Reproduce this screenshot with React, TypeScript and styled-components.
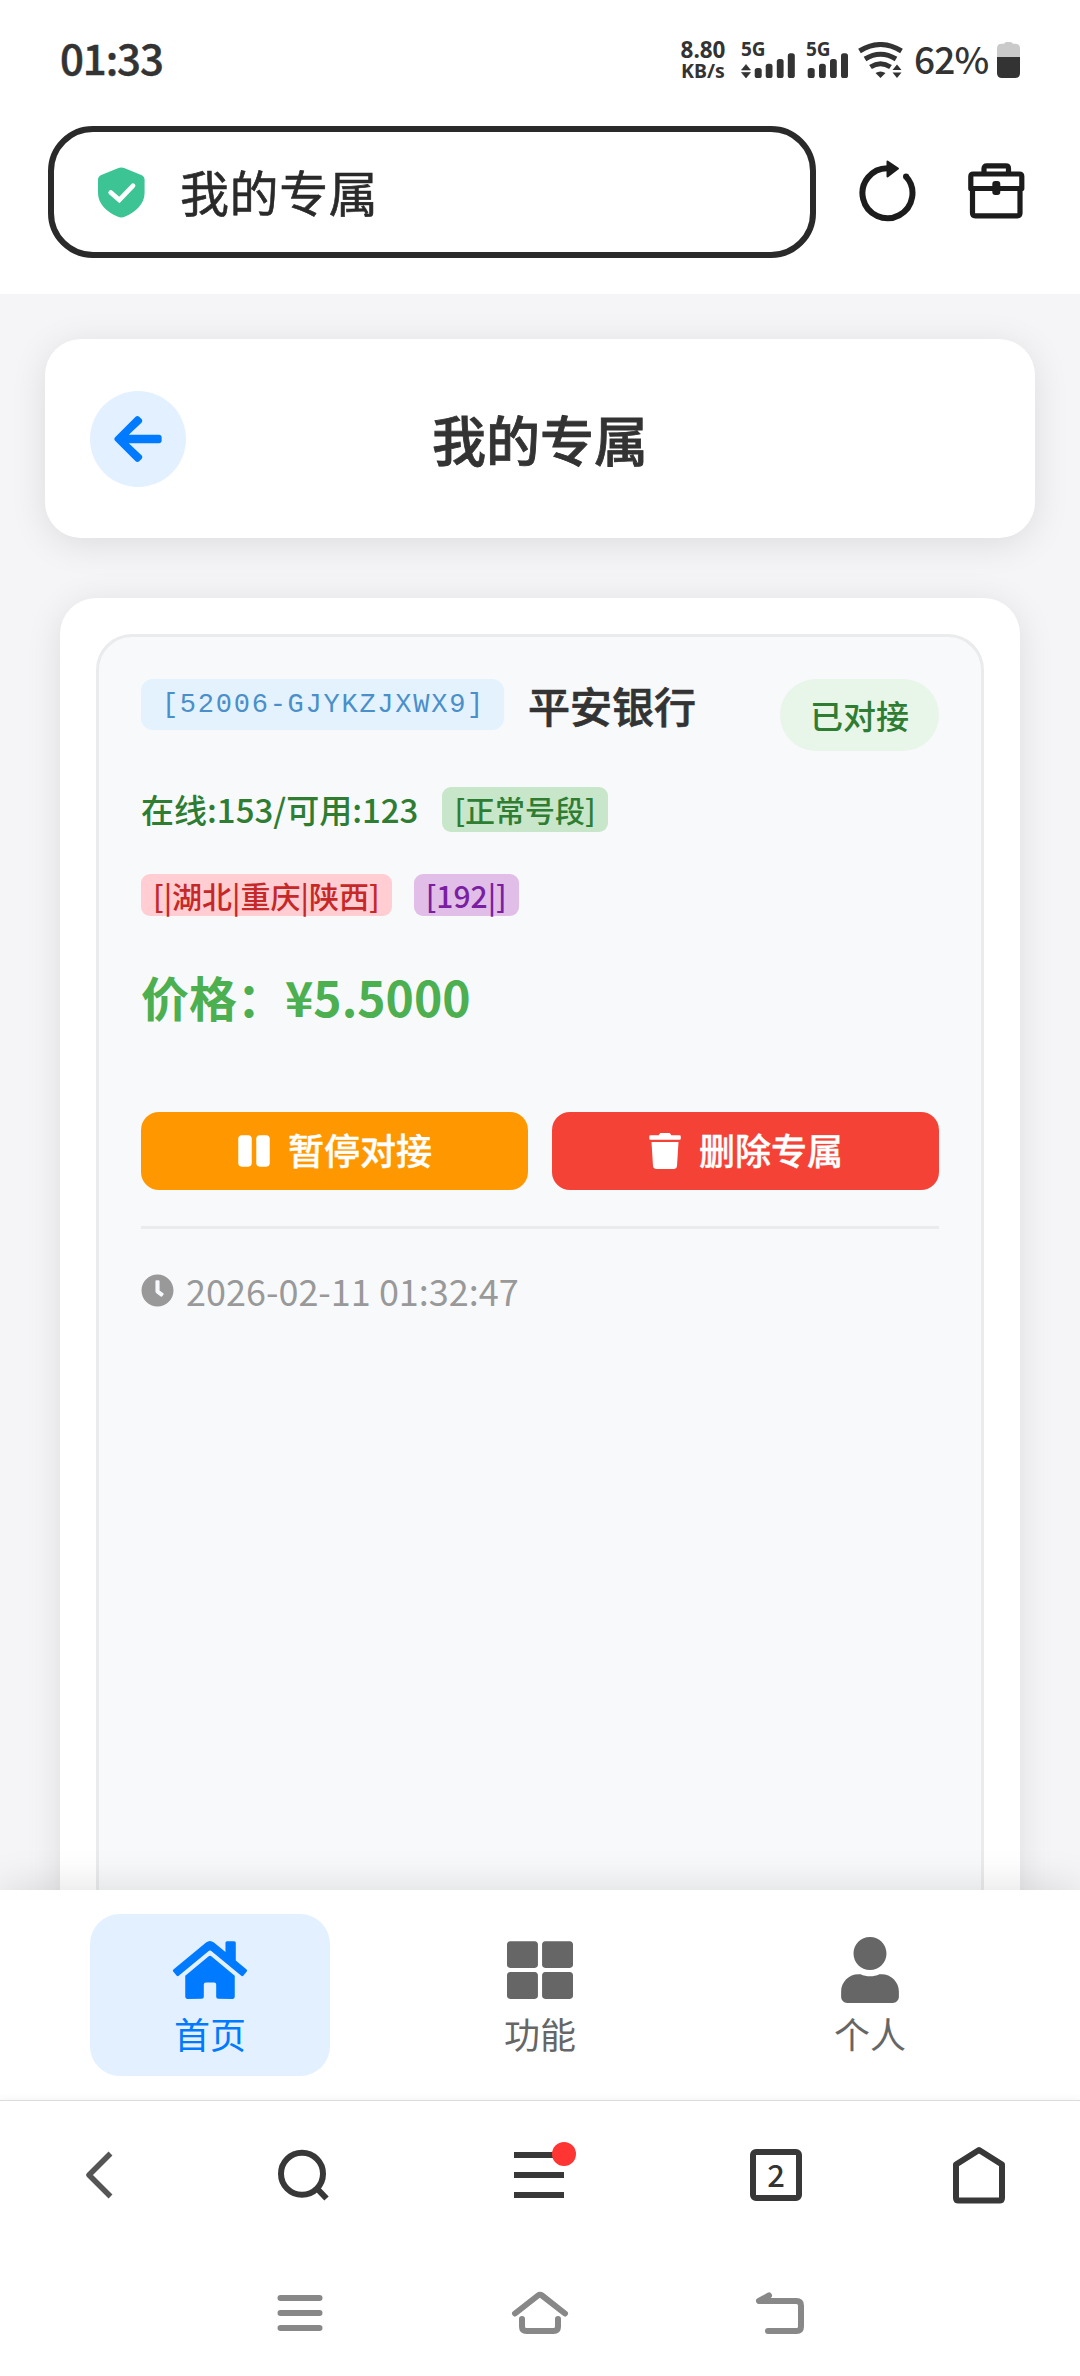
import React from 'react';
import styled, { createGlobalStyle } from 'styled-components';
import { FaArrowLeft, FaClock, FaHome, FaPause, FaThLarge, FaTrash, FaUser } from 'react-icons/fa';

const GlobalStyle = createGlobalStyle`
  * { box-sizing: border-box; }
  body {
    margin: 0;
    background: #fff;
    font-family: "Noto Sans CJK SC", "Noto Sans", sans-serif;
    color: #333;
  }
  svg { display: block; flex: none; }
`;

const Screen = styled.div`
  width: 1080px;
  height: 2376px;
  display: flex;
  flex-direction: column;
  overflow: hidden;
  background: #fff;
`;

/* ---------- status bar ---------- */

const StatusBar = styled.div`
  height: 126px;
  flex: none;
  display: flex;
  align-items: flex-start;
  padding: 0 60px 0 60px;
  color: #333;
`;

const Clock = styled.div`
  margin-top: 27px;
  font-size: 42px;
  line-height: 60px;
  font-weight: 500;
  letter-spacing: -1.1px;
  -webkit-text-stroke: 0.5px currentColor;
`;

const StatusIcons = styled.div`
  margin-left: auto;
  display: flex;
  align-items: flex-start;
`;

const NetSpeed = styled.div`
  width: 48px;
  margin: 38px 14px 0 0;
  text-align: center;
  font-family: "Noto Sans", sans-serif;
  font-weight: 700;
  white-space: nowrap;
`;

const SpeedValue = styled.div`
  font-size: 22.5px;
  line-height: 23px;
`;

const SpeedUnit = styled.div`
  font-size: 19.5px;
  line-height: 20px;
`;

const Signal = styled.div<{ $gap: number }>`
  width: 54px;
  height: 36px;
  margin: 42px ${(p) => p.$gap}px 0 0;
  position: relative;
`;

const SignalLabel = styled.span`
  position: absolute;
  left: 0;
  top: -2px;
  font: 700 19px/18px "Noto Sans", sans-serif;
`;

const Percent = styled.div`
  width: 73px;
  margin: 31px 10px 0 10px;
  font-size: 37px;
  line-height: 54px;
  font-weight: 500;
  letter-spacing: -0.8px;
  white-space: nowrap;
`;

const BatteryBox = styled.div`
  margin-top: 42px;
`;

/* ---------- browser address bar ---------- */

const AddressBar = styled.div`
  height: 168px;
  flex: none;
  display: flex;
  align-items: flex-start;
  padding-left: 48px;
`;

const UrlBox = styled.div`
  width: 768px;
  height: 132px;
  border: 6px solid #2a2a2a;
  border-radius: 45px;
  display: flex;
  align-items: center;
  padding: 0 0 0 44px;
  gap: 35px;
  font-size: 49px;
  letter-spacing: 0.6px;
  line-height: 60px;
  color: #2a2a2a;
`;

const UrlText = styled.span`
  margin-top: -2px;
  -webkit-text-stroke: 0.6px currentColor;
`;

const BarIcon = styled.div<{ $left: number; $top: number }>`
  margin: ${(p) => p.$top}px 0 0 ${(p) => p.$left}px;
`;

/* ---------- web page ---------- */

const Page = styled.main`
  height: 1596px;
  flex: none;
  overflow: hidden;
  background: #f5f5f8;
  padding: 45px 45px 0;
`;

const TitleCard = styled.header`
  height: 199px;
  padding: 0 45px;
  display: grid;
  grid-template-columns: 96px 1fr 96px;
  align-items: center;
  background: #fff;
  border-radius: 36px;
  box-shadow: 0 6px 36px rgba(0, 0, 0, 0.1);
`;

const BackButton = styled.button`
  width: 96px;
  height: 96px;
  padding: 0;
  border: 0;
  border-radius: 50%;
  background: #e3f0ff;
  color: #007aff;
  display: flex;
  align-items: center;
  justify-content: center;
`;

const Title = styled.h1`
  margin: 0;
  text-align: center;
  font-size: 54px;
  line-height: 78px;
  font-weight: 500;
  -webkit-text-stroke: 0.8px currentColor;
`;

const ListCard = styled.section`
  margin: 60px 15px 0;
  height: 1600px;
  padding: 36px;
  background: #fff;
  border-radius: 36px;
  box-shadow: 0 6px 36px rgba(0, 0, 0, 0.1);
`;

const Item = styled.article`
  height: 1500px;
  padding: 42px;
  border: 3px solid #e9ebed;
  border-radius: 36px;
  background: #f8f9fb;
`;

const ItemHead = styled.div`
  height: 72px;
  display: flex;
  align-items: flex-start;
`;

const Code = styled.span`
  width: 363px;
  height: 51px;
  padding-left: 2px;
  border-radius: 12px;
  background: #e3f2fd;
  color: #4a8fca;
  text-align: center;
  font: 27px/52px "Liberation Mono", monospace;
  letter-spacing: 1.75px;
`;

const BankName = styled.span`
  margin: -4px 0 0 24px;
  font-size: 42px;
  line-height: 60px;
  font-weight: 500;
  -webkit-text-stroke: 0.7px currentColor;
`;

const State = styled.span`
  margin-left: auto;
  height: 72px;
  padding: 0 30px;
  border-radius: 36px;
  background: #e8f5e9;
  color: #2e7d32;
  font-size: 33px;
  line-height: 72px;
  font-weight: 500;
`;

const TagRow = styled.div<{ $top: number; $gap: number }>`
  margin-top: ${(p) => p.$top}px;
  display: flex;
  align-items: center;
  gap: ${(p) => p.$gap}px;
`;

const Online = styled.span`
  color: #2e7d32;
  font-size: 33px;
  line-height: 45px;
  font-weight: 500;
`;

const Tag = styled.span<{ $bg: string; $fg: string; $h: number }>`
  height: ${(p) => p.$h}px;
  padding: 0 12px;
  border-radius: 9px;
  background: ${(p) => p.$bg};
  color: ${(p) => p.$fg};
  font-size: 30px;
  font-weight: 500;
  line-height: ${(p) => p.$h}px;
  white-space: nowrap;
`;

const Price = styled.div`
  margin-top: 50px;
  color: #4caf50;
  font-size: 48px;
  line-height: 61px;
  font-weight: 700;
`;

const Actions = styled.div`
  margin-top: 85px;
  display: grid;
  grid-template-columns: 1fr 1fr;
  gap: 24px;
`;

const Action = styled.button<{ $bg: string }>`
  height: 78px;
  padding: 0;
  border: 0;
  border-radius: 18px;
  background: ${(p) => p.$bg};
  color: #fff;
  display: flex;
  align-items: center;
  justify-content: center;
  font-family: inherit;
  font-size: 36px;
  font-weight: 500;
  line-height: 54px;
`;

const ActionLabel = styled.span`
  margin: -4px 1px 0 16px;
  -webkit-text-stroke: 0.4px currentColor;
`;

const Stamp = styled.div`
  margin-top: 36px;
  padding-top: 34px;
  border-top: 3px solid #e9ebed;
  display: flex;
  align-items: center;
  gap: 12px;
  color: #999;
  font-size: 36px;
  line-height: 54px;
`;

/* ---------- bottom tabs of the page ---------- */

const Tabs = styled.nav`
  height: 210px;
  flex: none;
  position: relative;
  padding: 24px 90px 0;
  display: flex;
  justify-content: space-between;
  align-items: flex-start;
  background: #fff;
  box-shadow: 0 -6px 36px rgba(0, 0, 0, 0.1);
`;

const Tab = styled.a<{ $active?: boolean }>`
  width: 240px;
  height: 162px;
  padding-top: 23px;
  border-radius: 30px;
  display: flex;
  flex-direction: column;
  align-items: center;
  background: ${(p) => (p.$active ? '#e3f0ff' : 'transparent')};
  color: ${(p) => (p.$active ? '#007aff' : '#666')};
  font-size: 36px;
  line-height: 54px;
  svg { width: 76px; height: 66px; }
`;

const TabLabel = styled.span`
  margin-top: 3px;
`;

/* ---------- browser toolbar and system keys ---------- */

const Toolbar = styled.div`
  height: 148px;
  flex: none;
  position: relative;
  border-top: 1px solid #dcdcdc;
  background: #fff;
  box-shadow: 0 -1px 8px rgba(0, 0, 0, 0.05);
  display: grid;
  grid-template-columns: 198px 210px 262px 212px 194px;
  align-items: center;
  justify-items: center;
`;

const WindowCount = styled.div`
  width: 52px;
  height: 52px;
  border: 6px solid #383838;
  border-radius: 6px;
  display: flex;
  align-items: center;
  justify-content: center;
  font-size: 31px;
  line-height: 36px;
  padding-bottom: 2px;
  font-weight: 500;
`;

const SystemKeys = styled.div`
  height: 128px;
  flex: none;
  position: relative;
  background: #fff;
  padding: 42px 180px 0;
  display: grid;
  grid-template-columns: repeat(3, 240px);
  justify-items: center;
  align-items: start;
`;

/* ---------- drawings ---------- */

const Bars = ({ data }: { data?: boolean }) => (
  <svg width="54" height="36" viewBox="0 0 54 36" fill="#333">
    {data && <path d="M5 22.5 9.5 28H.5zM5 36 .5 30.5h9z" stroke="#333" strokeWidth=".6" strokeLinejoin="round" />}
    <rect x={data ? 13.7 : 1.7} y="26" width="7" height="10" rx="2.6" />
    <rect x={data ? 24.7 : 13} y="21.7" width="6.8" height="14.3" rx="2.6" />
    <rect x={data ? 35.8 : 24} y="17" width="6.8" height="19" rx="2.6" />
    <rect x={data ? 46.8 : 35} y="11.3" width="7" height="24.7" rx="2.6" />
  </svg>
);

const Wifi = () => (
  <svg width="46" height="36" viewBox="0 0 46 36" fill="none" stroke="#333" strokeWidth="5">
    <path d="M1.5 9Q22.500 -4 43.500 9M7 17Q22.500 7.500 38 17M12.500 25Q22.500 18.500 32.500 25" />
    <path d="M17.500 31q5-3 10 0l-5 5z" fill="#333" stroke="none" />
    <path d="M39 22.500 43.500 28h-9zM39 36l-4.500-5.500h9z" fill="#333" stroke="none" />
  </svg>
);

const Battery = () => (
  <svg width="23" height="36" viewBox="0 0 23 36">
    <path d="M0 15V6.500Q0 2 4.500 1.800H7Q8 0 9.500 0h4Q15 0 16 1.800h2.500Q23 2 23 6.500V15z" fill="#cacaca" />
    <path d="M0 15h23v16q0 5-5 5H5q-5 0-5-5z" fill="#333" />
  </svg>
);

const Shield = () => (
  <svg width="47" height="51" viewBox="0 0 45 51" preserveAspectRatio="none" fill="none">
    <path d="M19 1.200Q22.300-.3 25.600 1.200L42 8.200q2.600 1.300 2.600 4V26c0 11-8.600 19-18.600 23.600q-3.700 1.700-7.400 0C8.600 45 0 37 0 26V12.200q0-2.700 2.600-4z" fill="#3cc494" />
    <path d="m12.200 25.500 8.200 7.500L33.500 18.800" stroke="#fff" strokeWidth="4.600" strokeLinecap="round" />
  </svg>
);

const Reload = () => (
  <svg width="58" height="62" viewBox="0 0 58 62" fill="none">
    <path d="M29 8.200A25 25 0 1 0 46.800 16.200" stroke="#1c1c1c" strokeWidth="6" />
    <path d="M28.500 1.500 39 8.500l-10.500 8z" fill="#1c1c1c" stroke="#1c1c1c" strokeWidth="2" strokeLinejoin="round" />
    <circle cx="47" cy="16.400" r="3" fill="#1c1c1c" />
  </svg>
);

const Briefcase = () => (
  <svg width="57" height="56" viewBox="0 0 57 56" fill="none" stroke="#1c1c1c" strokeWidth="5.200" strokeLinejoin="round">
    <path d="M16 11V5.500Q16 2.800 18.700 2.800h19.100q2.700 0 2.700 2.700V11" />
    <path d="M2.800 25.500V13.500q0-2.500 2.500-2.500h46q2.500 0 2.500 2.500v12z" />
    <path d="M4.500 26v24q0 2.800 2.800 2.800h42q2.700 0 2.700-2.800V26" />
    <rect x="24.300" y="18" width="8" height="14" rx="3" fill="#1c1c1c" stroke="none" />
  </svg>
);

const BackChevron = () => (
  <svg width="28" height="48" viewBox="0 0 28 48" fill="none" stroke="#555" strokeWidth="5.500" strokeLinejoin="round">
    <path d="M25.500 2.500 4 24l21.500 21.500" />
  </svg>
);

const Search = () => (
  <svg width="52" height="52" viewBox="0 0 52 52" fill="none" stroke="#383838" strokeWidth="6">
    <circle cx="25" cy="24.700" r="21" />
    <path d="m39 38.500 10.500 11" />
  </svg>
);

const MenuWithDot = () => (
  <svg width="74" height="74" viewBox="0 -6 74 74" fill="none">
    <path d="M12 11h50M12 31h50M12 51h50" stroke="#383838" strokeWidth="6" />
    <circle cx="62" cy="10" r="12" fill="#ff3533" />
  </svg>
);

const Homepage = () => (
  <svg width="52" height="58" viewBox="0 0 52 58" fill="none" stroke="#383838" strokeWidth="6" strokeLinejoin="round">
    <path d="M3 18.500 26 4l23 14.500V52q0 2.500-2.500 2.500h-41Q3 54.500 3 52z" />
  </svg>
);

const Recents = () => (
  <svg width="46" height="46" viewBox="0 0 46 46" fill="none" stroke="#888" strokeWidth="6" strokeLinecap="round">
    <path d="M3.500 8h39M3.500 23h39M3.500 38h39" />
  </svg>
);

const HomeKey = () => (
  <svg width="58" height="46" viewBox="0 0 58 46" fill="none" stroke="#888" strokeWidth="6" strokeLinecap="round" strokeLinejoin="round">
    <path d="M4 23.500 27 5.500q2-1.500 4 0l23 18M11 29v7.500q0 4.500 4.500 4.500h27q4.500 0 4.500-4.500V29" />
  </svg>
);

const BackKey = () => (
  <svg width="50" height="46" viewBox="0 0 50 46" fill="none" stroke="#888" strokeWidth="6" strokeLinecap="round" strokeLinejoin="round">
    <path d="M14 5.500 4 11h37.500q4.500 0 4.500 4.500v21q0 4.500-4.500 4.500H13" />
  </svg>
);

export default function App() {
  return (
    <>
      <GlobalStyle />
      <Screen>
        <StatusBar>
          <Clock>01:33</Clock>
          <StatusIcons>
            <NetSpeed>
              <SpeedValue>8.80</SpeedValue>
              <SpeedUnit>KB/s</SpeedUnit>
            </NetSpeed>
            <Signal $gap={11}>
              <Bars data />
              <SignalLabel>5G</SignalLabel>
            </Signal>
            <Signal $gap={-2}>
              <Bars />
              <SignalLabel>5G</SignalLabel>
            </Signal>
            <BatteryBox>
              <Wifi />
            </BatteryBox>
            <Percent>62%</Percent>
            <BatteryBox>
              <Battery />
            </BatteryBox>
          </StatusIcons>
        </StatusBar>

        <AddressBar>
          <UrlBox>
            <Shield />
            <UrlText>我的专属</UrlText>
          </UrlBox>
          <BarIcon $left={43} $top={34}>
            <Reload />
          </BarIcon>
          <BarIcon $left={51} $top={37}>
            <Briefcase />
          </BarIcon>
        </AddressBar>

        <Page>
          <TitleCard>
            <BackButton aria-label="返回">
              <FaArrowLeft size={54} />
            </BackButton>
            <Title>我的专属</Title>
          </TitleCard>

          <ListCard>
            <Item>
              <ItemHead>
                <Code>[52006-GJYKZJXWX9]</Code>
                <BankName>平安银行</BankName>
                <State>已对接</State>
              </ItemHead>
              <TagRow $top={36} $gap={24}>
                <Online>在线:153/可用:123</Online>
                <Tag $bg="#c8e6c9" $fg="#2e7d32" $h={45}>[正常号段]</Tag>
              </TagRow>
              <TagRow $top={42} $gap={22}>
                <Tag $bg="#ffcdd2" $fg="#c62828" $h={42}>[|湖北|重庆|陕西]</Tag>
                <Tag $bg="#e1bee7" $fg="#7b1fa2" $h={42}>[192|]</Tag>
              </TagRow>
              <Price>价格：¥5.5000</Price>
              <Actions>
                <Action $bg="#ff9800">
                  <FaPause size={36} />
                  <ActionLabel>暂停对接</ActionLabel>
                </Action>
                <Action $bg="#f44336">
                  <FaTrash size={36} />
                  <ActionLabel>删除专属</ActionLabel>
                </Action>
              </Actions>
              <Stamp>
                <FaClock size={33} />
                <span>2026-02-11 01:32:47</span>
              </Stamp>
            </Item>
          </ListCard>
        </Page>

        <Tabs>
          <Tab $active>
            <FaHome />
            <TabLabel>首页</TabLabel>
          </Tab>
          <Tab>
            <FaThLarge />
            <TabLabel>功能</TabLabel>
          </Tab>
          <Tab>
            <FaUser />
            <TabLabel>个人</TabLabel>
          </Tab>
        </Tabs>

        <Toolbar>
          <BackChevron />
          <Search />
          <MenuWithDot />
          <WindowCount>2</WindowCount>
          <Homepage />
        </Toolbar>

        <SystemKeys>
          <Recents />
          <HomeKey />
          <BackKey />
        </SystemKeys>
      </Screen>
    </>
  );
}
